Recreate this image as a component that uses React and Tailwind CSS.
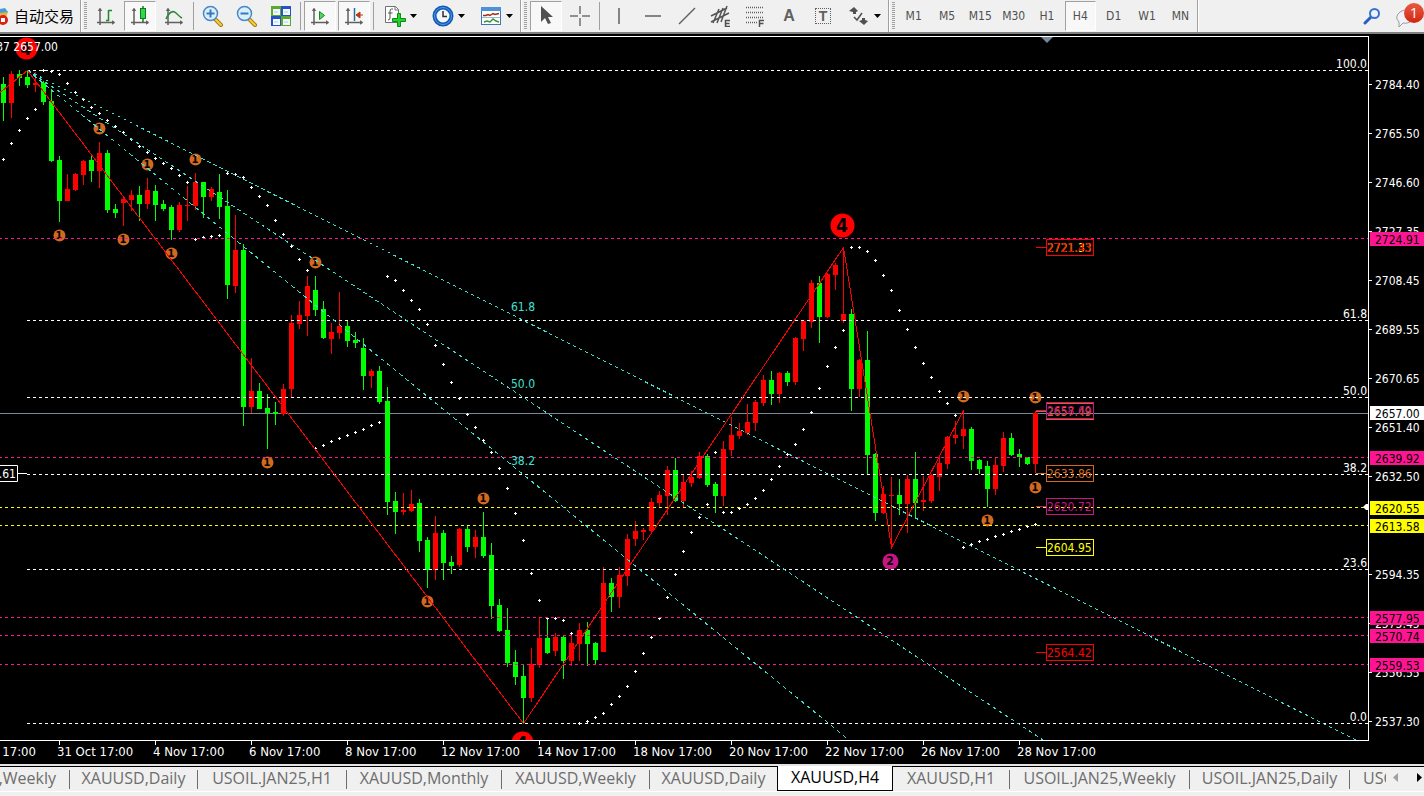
import clsx from 'clsx';

// Every bar is [direction, high, body top, body bottom, low], one bar each 8px
const BARS = [
  ['d', 77, 84, 103, 121], ['u', 71, 74, 103, 118], ['d', 70, 74, 78, 86], ['d', 70, 77, 85, 88],
  ['u', 72, 83, 85, 92], ['d', 81, 83, 102, 105], ['d', 89, 101, 161, 162], ['d', 156, 160, 201, 222],
  ['u', 174, 189, 201, 201], ['u', 173, 174, 190, 191], ['u', 160, 161, 175, 185], ['d', 154, 160, 171, 182],
  ['u', 142, 153, 171, 188], ['d', 150, 153, 210, 213], ['d', 204, 209, 213, 218], ['u', 196, 199, 203, 226],
  ['u', 190, 195, 200, 211], ['d', 186, 195, 204, 221], ['u', 178, 190, 204, 209], ['d', 185, 191, 205, 221],
  ['d', 200, 204, 209, 211], ['d', 205, 207, 230, 240], ['u', 202, 205, 230, 232], ['u', 186, 205, 206, 221],
  ['u', 173, 182, 206, 210], ['d', 182, 182, 197, 218], ['u', 187, 189, 197, 201], ['d', 174, 192, 207, 219],
  ['d', 190, 206, 285, 299], ['u', 215, 250, 286, 293], ['d', 244, 250, 407, 426], ['u', 358, 391, 407, 413],
  ['d', 383, 391, 409, 409], ['d', 394, 408, 413, 449], ['d', 402, 412, 414, 425], ['u', 384, 389, 414, 416],
  ['u', 315, 323, 389, 397], ['u', 301, 315, 324, 329], ['u', 276, 286, 316, 336], ['d', 276, 290, 310, 316],
  ['d', 301, 309, 338, 339], ['u', 323, 332, 339, 354], ['u', 292, 326, 333, 339], ['d', 321, 326, 341, 347],
  ['d', 332, 340, 343, 348], ['d', 338, 348, 376, 390], ['u', 369, 371, 376, 388], ['d', 366, 371, 402, 404],
  ['d', 387, 401, 502, 515], ['d', 492, 501, 512, 534], ['u', 493, 510, 512, 515], ['u', 490, 504, 511, 512],
  ['d', 499, 503, 541, 552], ['d', 537, 540, 570, 588], ['u', 516, 533, 570, 580], ['d', 530, 533, 563, 580],
  ['d', 556, 562, 566, 574], ['u', 528, 529, 565, 567], ['d', 526, 529, 547, 552], ['u', 530, 537, 547, 558],
  ['d', 512, 537, 556, 558], ['d', 543, 555, 606, 619], ['d', 599, 605, 631, 632], ['d', 608, 630, 663, 667],
  ['d', 650, 662, 677, 685], ['d', 665, 676, 698, 723], ['u', 648, 664, 698, 702], ['u', 617, 638, 665, 668],
  ['d', 618, 638, 653, 654], ['u', 633, 637, 651, 656], ['d', 636, 637, 661, 679], ['u', 635, 643, 661, 666],
  ['u', 623, 630, 644, 661], ['d', 622, 630, 644, 666], ['d', 642, 643, 660, 664], ['u', 567, 583, 652, 652],
  ['d', 578, 583, 597, 612], ['u', 567, 575, 597, 608], ['u', 534, 539, 576, 586], ['u', 521, 531, 539, 546],
  ['u', 528, 530, 532, 540], ['u', 498, 502, 531, 533], ['u', 491, 495, 503, 507], ['u', 466, 470, 496, 515],
  ['d', 458, 470, 501, 502], ['u', 475, 482, 501, 507], ['u', 471, 477, 483, 487], ['u', 452, 456, 478, 479],
  ['d', 454, 456, 485, 487], ['d', 482, 484, 496, 513], ['u', 441, 449, 496, 506], ['u', 417, 435, 450, 456],
  ['u', 423, 431, 436, 439], ['u', 404, 422, 433, 435], ['u', 400, 402, 423, 431], ['u', 375, 380, 403, 406],
  ['d', 371, 380, 394, 405], ['u', 372, 373, 394, 403], ['d', 371, 373, 382, 386], ['u', 337, 338, 382, 385],
  ['u', 321, 321, 339, 351], ['u', 280, 283, 322, 328], ['d', 276, 283, 317, 343], ['u', 273, 274, 317, 318],
  ['u', 263, 265, 275, 290], ['u', 247, 314, 321, 323], ['d', 309, 314, 389, 411], ['u', 359, 360, 389, 397],
  ['d', 331, 360, 455, 475], ['d', 453, 454, 513, 521], ['u', 486, 494, 513, 514], ['u', 477, 495, 496, 547],
  ['d', 479, 495, 504, 515], ['u', 475, 479, 504, 533], ['d', 452, 479, 503, 519], ['u', 476, 500, 502, 511],
  ['u', 474, 475, 501, 503], ['u', 456, 463, 477, 491], ['u', 436, 437, 464, 469], ['u', 421, 435, 438, 444],
  ['u', 410, 429, 436, 449], ['d', 427, 429, 461, 470], ['d', 459, 460, 469, 474], ['d', 461, 466, 489, 507],
  ['u', 457, 465, 489, 495], ['u', 432, 438, 466, 472], ['d', 433, 438, 455, 456], ['d', 449, 454, 457, 467],
  ['d', 457, 457, 464, 465], ['u', 411, 413, 464, 473],
];

// Parabolic SAR, one dot per bar
const SAR = [
  159, 143, 130, 118, 109, 70, 71, 74, 83, 92, 99, 107, 113, 120, 126, 132, 139, 146, 152, 158,
  163, 168, 175, 182, 239, 237, 236, 235, 173, 174, 177, 187, 196, 205, 220, 234, 246, 259, 270, 448,
  445, 441, 438, 435, 432, 429, 425, 422, 276, 280, 290, 300, 309, 324, 345, 364, 382, 398, 414, 427,
  440, 452, 468, 488, 513, 540, 573, 600, 618, 618, 620, 633, 723, 721, 717, 713, 704, 696, 686, 671,
  653, 637, 618, 597, 574, 551, 532, 517, 504, 452, 512, 512, 508, 504, 498, 490, 479, 466, 454, 444,
  429, 412, 388, 366, 347, 330, 247, 247, 251, 260, 275, 290, 310, 329, 347, 363, 377, 391, 403, 415,
  547, 544, 541, 539, 536, 534, 531, 529, 526, 524,
];

const FIBS = [
  { y: 70, label: '100.0' },
  { y: 320, label: '61.8' },
  { y: 397, label: '50.0' },
  { y: 474, label: '38.2' },
  { y: 569, label: '23.6' },
  { y: 723, label: '0.0' },
];

const FANS = [
  { x: 1356, y: 740, label: '61.8', labelY: 311 },
  { x: 1043, y: 740, label: '50.0', labelY: 388 },
  { x: 849, y: 740, label: '38.2', labelY: 465 },
];

const LEVELS = [
  { y: 238, price: '2724.91', color: '#ff1493' },
  { y: 457, price: '2639.92', color: '#ff1493' },
  { y: 507, price: '2620.55', color: '#ffff00' },
  { y: 525, price: '2613.58', color: '#ffff00' },
  { y: 617, price: '2577.95', color: '#ff1493' },
  { y: 635, price: '2570.74', color: '#ff1493' },
  { y: 664, price: '2559.53', color: '#ff1493' },
];

const TICKS = [
  [84, '2784.40'], [133, '2765.50'], [182, '2746.60'], [231, '2727.35'], [280, '2708.45'],
  [329, '2689.55'], [378, '2670.65'], [427, '2651.40'], [476, '2632.50'],
  [574, '2594.35'], [623, '2575.45'], [672, '2556.55'], [721, '2537.30'],
];

const SMALL_MARKS = [
  [99, 128], [59, 235], [123, 239], [171, 253], [147, 164], [195, 159], [267, 462],
  [315, 262], [427, 601], [483, 498], [963, 396], [1035, 397], [1035, 487], [987, 520],
];

const TAGS = [
  { y: 247, price: '2721.33', color: '#ffff00' },
  { y: 247, price: '2721.43', color: '#ff0000' },
  { y: 411, price: '2657.49', color: '#d2691e' },
  { y: 410, price: '2658.69', color: '#c71585' },
  { y: 473, price: '2633.86', color: '#d2691e' },
  { y: 506, price: '2620.72', color: '#c71585' },
  { y: 547, price: '2604.95', color: '#ffff00' },
  { y: 652, price: '2564.42', color: '#ff0000' },
];

const DATES = [
  '31 Oct 17:00', '4 Nov 17:00', '6 Nov 17:00', '8 Nov 17:00', '12 Nov 17:00', '14 Nov 17:00',
  '18 Nov 17:00', '20 Nov 17:00', '22 Nov 17:00', '26 Nov 17:00', '28 Nov 17:00',
];

const TABS = [
  { label: 'XAUUSD,Weekly', width: 'w-[70px]', clipped: true },
  { label: 'XAUUSD,Daily', width: 'w-[128px]' },
  { label: 'USOIL.JAN25,H1', width: 'w-[149px]' },
  { label: 'XAUUSD,Monthly', width: 'w-[155px]' },
  { label: 'XAUUSD,Weekly', width: 'w-[148px]' },
  { label: 'XAUUSD,Daily', width: 'w-[127px]', noLine: true },
  { label: 'XAUUSD,H4', width: 'w-[116px]', active: true },
  { label: 'XAUUSD,H1', width: 'w-[117px]' },
  { label: 'USOIL.JAN25,Weekly', width: 'w-[180px]' },
  { label: 'USOIL.JAN25,Daily', width: 'w-[160px]' },
];

const TIMEFRAMES = ['M1', 'M5', 'M15', 'M30', 'H1', 'H4', 'D1', 'W1', 'MN'];

const FONT = 'font-["DejaVu_Sans_Condensed","DejaVu_Sans",sans-serif]';

/* ---------- toolbar ---------- */

function Icon({ size = 22, children }) {
  return (
    <svg width={size} height={size} viewBox={`0 0 ${size} ${size}`} fill="none" className="shrink-0" aria-hidden="true">
      {children}
    </svg>
  );
}

function ToolButton({ label, pressed, menu, children }) {
  return (
    <button
      type="button"
      aria-label={label}
      aria-pressed={pressed}
      className={clsx('h-[31px] flex items-center justify-center shrink-0', menu ? 'w-12 gap-1' : 'w-[34px] px-px')}
    >
      {pressed ? (
        <span className="w-full h-[30px] flex items-center justify-center bg-[#f8f8f8] border border-t-[#a0a0a0] border-l-[#a0a0a0] border-r-white border-b-white">
          {children}
        </span>
      ) : children}
      {menu && (
        <svg width="7" height="4" viewBox="0 0 7 4" className="shrink-0" aria-hidden="true">
          <path d="M0 0h7L3.500 4z" fill="#000" />
        </svg>
      )}
    </button>
  );
}

const Divider = () => <span className="w-px h-7 mx-[2px] bg-[#a0a0a0] shrink-0" />;

function Grip() {
  return (
    <span className="flex items-center h-full shrink-0">
      <span className="w-[2px] h-8 border-l border-l-[#a0a0a0] bg-white" />
      <svg width="7" height="28" className="shrink-0" aria-hidden="true">
        <path d="M3.500 0V28" stroke="#a0a0a0" strokeWidth="3" strokeDasharray="1 1" />
      </svg>
    </span>
  );
}

function Axes() {
  return (
    <g stroke="#606060" strokeWidth="1.500">
      <path d="M5 4v16M2 17.500h17" />
      <path d="M3 6l2-3 2 3M17 15.500l3 2-3 2" fill="#606060" strokeWidth="0.500" />
    </g>
  );
}

function Magnifier({ plus }) {
  return (
    <Icon>
      <path d="M14 15l5 5" stroke="#a87b12" strokeWidth="4" strokeLinecap="round" />
      <path d="M14 15l5 5" stroke="#f6cf3c" strokeWidth="2" strokeLinecap="round" />
      <circle cx="8.500" cy="8.500" r="7" fill="#d8f0fe" stroke="#4a86c8" strokeWidth="1.500" />
      <path d={plus ? 'M4.500 8.500h8M8.500 4.500v8' : 'M4.500 8.500h8'} stroke="#3c78b4" strokeWidth="2" />
    </Icon>
  );
}

function Toolbar() {
  return (
    <header className="flex items-center h-[34px] bg-[#f0f0f0] border-b-2 border-b-[#808080] overflow-hidden shrink-0">
      <button type="button" className="flex items-center w-20 h-8 gap-[5px] shrink-0 text-[15px] text-black font-['Noto_Sans_CJK_SC',sans-serif] whitespace-nowrap">
        <svg width="9" height="22" viewBox="0 0 9 22" className="shrink-0" aria-hidden="true">
          <path d="M0 4l5-1 3 4-3 5H0z" fill="#4b9bd4" />
          <path d="M0 8l8-1-2 5H0z" fill="#e5b04a" />
          <circle cx="3" cy="15" r="5" fill="#d9230f" />
          <rect x="1" y="13" width="4" height="4" fill="#fff" />
        </svg>
        自动交易
      </button>
      <Grip />
      <ToolButton label="Bar chart">
        <Icon>
          <Axes />
          <path d="M11 15.500h3M13.500 16V5M13.500 5.500H17" stroke="#1a8a2a" strokeWidth="1.500" />
        </Icon>
      </ToolButton>
      <ToolButton label="Candlesticks" pressed>
        <Icon>
          <Axes />
          <path d="M14 1v16" stroke="#137a1c" strokeWidth="1.500" />
          <rect x="11.500" y="3.500" width="5" height="10" fill="#2fd84a" stroke="#137a1c" />
        </Icon>
      </ToolButton>
      <ToolButton label="Line chart">
        <Icon>
          <Axes />
          <path d="M3 14C6 7 10 5 13 8s4 4 6 5" stroke="#2c8a3c" strokeWidth="1.500" />
        </Icon>
      </ToolButton>
      <Divider />
      <ToolButton label="Zoom in"><Magnifier plus /></ToolButton>
      <ToolButton label="Zoom out"><Magnifier /></ToolButton>
      <ToolButton label="Tile windows">
        <Icon>
          <rect x="1" y="1" width="10" height="10" fill="#5aaa2c" />
          <rect x="11" y="1" width="10" height="10" fill="#2452c8" />
          <rect x="1" y="11" width="10" height="10" fill="#2452c8" />
          <rect x="11" y="11" width="10" height="10" fill="#5aaa2c" />
          <path d="M3 4h7v6H3zM13 4h7v6h-7zM3 14h7v6H3zM13 14h7v6h-7z" fill="#f4f8ff" />
          <path d="M4 7h4M14 7h4M4 17h4M14 17h4" stroke="#b9c9ee" />
        </Icon>
      </ToolButton>
      <Divider />
      <ToolButton label="Auto scroll" pressed>
        <Icon>
          <Axes />
          <path d="M10.500 6.500v8l5-4z" fill="#4fd860" stroke="#17871f" />
        </Icon>
      </ToolButton>
      <ToolButton label="Chart shift" pressed>
        <Icon>
          <Axes />
          <path d="M11.500 3v13" stroke="#2a6c9c" strokeWidth="1.500" />
          <path d="M13 10h7M13 10l4-3v6z" stroke="#b83a10" fill="#b83a10" />
        </Icon>
      </ToolButton>
      <Divider />
      <ToolButton label="Indicators" menu>
        <Icon>
          <path d="M1.500 1.500h10l3 3v13h-13z" fill="#fff" stroke="#707070" />
          <path d="M11 1.500V5h3.500" stroke="#707070" />
          <path d="M9 4H7.500Q6 4 6 6v7q0 2-2 2M4 8h4.500" stroke="#505050" />
          <path d="M8.500 13.500h5v-5h3v5h5v3h-5v5h-3v-5h-5z" fill="#22d52c" stroke="#0c8c16" />
        </Icon>
      </ToolButton>
      <ToolButton label="Periods" menu>
        <Icon>
          <circle cx="11" cy="11" r="8.500" fill="#f2f6fa" stroke="#1458b4" strokeWidth="4" />
          <circle cx="11" cy="11" r="8.500" stroke="#4b9ff0" />
          <path d="M11 6v5.500h4" stroke="#303030" strokeWidth="1.500" />
        </Icon>
      </ToolButton>
      <ToolButton label="Templates" menu>
        <Icon>
          <rect x="1.500" y="2.500" width="19" height="17" fill="#fff" stroke="#3a78b8" />
          <path d="M1 2h20v4H1z" fill="#4c92d8" />
          <path d="M3 10.500h3l2-1 2 1 3-2 2 1 4-1" stroke="#a02c10" strokeWidth="1.500" />
          <path d="M2 12.500h18" stroke="#9fb8d4" />
          <path d="M4 17l3-1 3 1 3-3 3 2 3 1" stroke="#2a9a34" strokeWidth="1.500" />
        </Icon>
      </ToolButton>
      <Grip />
      <ToolButton label="Cursor" pressed>
        <Icon><path d="M6 1v16l4-4 3 6 3-1-3-6h5z" fill="#505050" /></Icon>
      </ToolButton>
      <ToolButton label="Crosshair">
        <Icon><path d="M11 1v8M11 13v8M1 11h8M13 11h8" stroke="#707070" strokeWidth="1.500" /></Icon>
      </ToolButton>
      <Divider />
      <ToolButton label="Vertical line">
        <Icon><path d="M11 3v16" stroke="#606060" strokeWidth="1.500" /></Icon>
      </ToolButton>
      <ToolButton label="Horizontal line">
        <Icon><path d="M3 11h16" stroke="#606060" strokeWidth="1.500" /></Icon>
      </ToolButton>
      <ToolButton label="Trendline">
        <Icon><path d="M3 19L19 3" stroke="#606060" strokeWidth="1.500" /></Icon>
      </ToolButton>
      <ToolButton label="Equidistant channel">
        <Icon>
          <path d="M1 11L17 3M1 17L19 8M3 18L9 4M7 18L13 3M11 17L17 1" stroke="#555" strokeWidth="1.500" />
          <path d="M20 15.500h-4.500v6H20M16 18.500h3.500" stroke="#505050" strokeWidth="1.500" />
        </Icon>
      </ToolButton>
      <ToolButton label="Fibonacci retracement">
        <Icon>
          <path d="M2 2.500h18M2 7.500h18M2 12.500h18M2 17.500h11" stroke="#606060" strokeDasharray="1 1" strokeWidth="1.500" />
          <path d="M20 15.500h-4.500V22M16 18.500h3.500" stroke="#505050" strokeWidth="1.500" />
        </Icon>
      </ToolButton>
      <ToolButton label="Text">
        <span className="font-['Liberation_Sans',sans-serif] font-bold text-[16px] text-[#606060]">A</span>
      </ToolButton>
      <ToolButton label="Text label">
        <span className="w-4 h-4 flex items-center justify-center border border-dotted border-[#606060] font-['Liberation_Sans',sans-serif] font-bold text-[14px] leading-4 text-[#606060]">T</span>
      </ToolButton>
      <ToolButton label="Arrows" menu>
        <Icon>
          <path d="M6 2l4 4-2 1v2H5V7L1 6z" fill="#505050" />
          <path d="M16 20l-5-4 3-1v-2h3v2l3 1z" fill="#505050" />
          <path d="M6 12l3 3 5-7" stroke="#505050" strokeWidth="1.500" />
        </Icon>
      </ToolButton>
      <Grip />
      <div className={clsx('grid grid-cols-9 w-[300px] h-[31px] shrink-0 text-[12px] text-[#505050]', FONT)}>
        {TIMEFRAMES.map(tf => (
          <button
            key={tf}
            type="button"
            aria-pressed={tf === 'H4'}
            className={clsx(
              'h-[30px] mx-px border text-center',
              tf === 'H4'
                ? 'bg-[#f8f8f8] border-t-[#a0a0a0] border-l-[#a0a0a0] border-r-white border-b-white'
                : 'border-transparent',
            )}
          >
            {tf}
          </button>
        ))}
      </div>
      <span className="w-[2px] h-8 border-l border-l-[#a0a0a0] bg-white shrink-0" />
      <div className="flex items-center ml-auto shrink-0">
        <button type="button" aria-label="Search" className="w-8 h-8 flex items-center justify-center">
          <Icon size={18}>
            <path d="M8 10l-6 6" stroke="#2a5cc4" strokeWidth="3" strokeLinecap="round" />
            <circle cx="11.500" cy="6.500" r="4.500" fill="#eef4ff" stroke="#3a70d0" strokeWidth="2" />
          </Icon>
        </button>
        <button type="button" aria-label="Messages" className="relative w-9 h-8">
          <svg width="36" height="32" viewBox="0 0 36 32" fill="none" aria-hidden="true">
            <path d="M12 12q6-4 13 0 4 6-3 10-4 2-7 1l-4 4v-5q-5-5 1-10z" fill="#f2f2f6" stroke="#9a9aa4" />
          </svg>
          <span className="absolute top-[3px] right-0 w-5 h-5 rounded-full bg-gradient-to-b from-[#ea5a40] to-[#d22010] text-white text-[14px] leading-5 text-center font-['Open_Sans',sans-serif]">
            1
          </span>
        </button>
      </div>
    </header>
  );
}

/* ---------- chart ---------- */

function Mark({ x, y, r, fill, digit, size }) {
  return (
    <g>
      <circle cx={x + 0.5} cy={y + 0.5} r={r} fill={fill} />
      <text x={x} y={y + Math.round(size * 0.37)} textAnchor="middle" fontSize={size} fontWeight="bold" fill="#000">
        {digit}
      </text>
    </g>
  );
}

function PriceTag({ y, price, color }) {
  return (
    <g>
      <path d={`M1036 ${y + 0.5}H1046`} stroke={color} />
      <rect x="1046.500" y={y - 7.5} width="47" height="16" stroke={color} fill="none" />
      <text x="1047" y={y + 5} fill={color}>{price}</text>
    </g>
  );
}

function Plot() {
  return (
    <svg width="100%" height="100%" className={clsx('block text-[12px]', FONT)} role="img" aria-label="XAUUSD,H4">
      <g transform="translate(0 -37)">
        <path d="M1041 37h12l-6 6z" fill="#778899" />

        <g shapeRendering="crispEdges">
          <rect x="0" y="413" width="100%" height="1" fill="#778899" />
          {BARS.map(([dir, high, top, bottom, low], i) => (
            <g key={i} fill={dir === 'u' ? '#ff0000' : '#00ff00'}>
              <rect x={3 + i * 8} y={high} width="1" height={low - high} />
              <rect x={1 + i * 8} y={top} width="5" height={bottom - top} />
            </g>
          ))}
          {SAR.map((y, i) => (
            <path key={i} d={`M${2 + i * 8} ${y + 0.5}h3M${3.5 + i * 8} ${y - 1}v3`} stroke="#fff" />
          ))}
        </g>

        {SMALL_MARKS.map(([x, y]) => (
          <Mark key={`${x}-${y}`} x={x} y={y} r={6} fill="#d2691e" digit="1" size={11} />
        ))}
        <Mark x={890} y={561} r={8} fill="#c71585" digit="2" size={12} />
        <Mark x={26} y={48} r={11} fill="#ff0000" digit="4" size={18} />
        <Mark x={842} y={225} r={12} fill="#ff0000" digit="4" size={19} />
        <Mark x={522} y={742} r={11} fill="#ff0000" digit="4" size={18} />
        <text x="58" y="51" textAnchor="end" fill="#fff">2656.37 2657.00</text>

        <g shapeRendering="crispEdges" fill="none">
          {LEVELS.map(l => (
            <line key={l.y} x1="-1" x2="100%" y1={l.y + 0.5} y2={l.y + 0.5} stroke={l.color} strokeDasharray="3 3" />
          ))}
          {FIBS.map(f => (
            <line key={f.y} x1="27" x2="100%" y1={f.y + 0.5} y2={f.y + 0.5} stroke="#fff" strokeDasharray="3 3" />
          ))}
          {FANS.map(f => (
            <path
              key={f.label}
              d={`M27.500 70.500L${f.x} ${f.y}`}
              pathLength={f.x - 27}
              stroke="#40e0d0"
              strokeDasharray="3 3"
            />
          ))}
          <path d="M0 92.500L27.500 70.500L523.500 723.500L843.500 247.500L891.500 547.500L963.500 410.500" stroke="#ff0000" />
        </g>

        {FANS.map(f => (
          <text key={f.label} x="511" y={f.labelY} fill="#40e0d0">{f.label}</text>
        ))}
        {/* the nested svg keeps the labels on the right edge at any width */}
        <svg x="100%" overflow="visible">
          {FIBS.map(f => (
            <text key={f.label} x="-1" y={f.y - 2} textAnchor="end" fill="#fff">{f.label}</text>
          ))}
          <path d="M-5 507l3-3h2v6h-2z" fill="#fff" />
        </svg>

        {TAGS.map(t => <PriceTag key={t.price} {...t} />)}
        <path d="M0 465.500H17.500V481.500H0M17 473.500H27" stroke="#fff" fill="none" />
        <text x="16" y="478" textAnchor="end" fill="#fff">2633.61</text>
      </g>
    </svg>
  );
}

function PriceLabel({ y, price, color }) {
  return (
    <g>
      <rect x="1" y={y - 6} width="100%" height="14" fill={color} />
      <text x="6" y={y + 6} fill="#000">{price}</text>
    </g>
  );
}

function PriceAxis() {
  return (
    <svg width="100%" height="100%" className={clsx('block text-[12px]', FONT)}>
      <g transform="translate(0 -36)">
        {TICKS.map(([y, price]) => (
          <g key={y} fill="#fff">
            <rect x="0" y={y} width="3" height="1" />
            <text x="6" y={y + 5}>{price}</text>
          </g>
        ))}
        {LEVELS.map(l => <PriceLabel key={l.y} {...l} />)}
        <PriceLabel y={412} price="2657.00" color="#fff" />
      </g>
    </svg>
  );
}

function TimeAxis() {
  return (
    <svg width="100%" height="100%" className={clsx('block text-[13px]', FONT)}>
      <text x="36" y="15" textAnchor="end" fill="#fff">29 Oct 17:00</text>
      {DATES.map((date, i) => (
        <g key={date} fill="#fff">
          <rect x={59 + i * 96} y="0" width="1" height="4" />
          <text x={57 + i * 96} y="15">{date}</text>
        </g>
      ))}
    </svg>
  );
}

/* ---------- chart tabs ---------- */

function ChartTabs() {
  return (
    <nav className="flex h-[30px] bg-[#f0f0f0] shrink-0 font-['Open_Sans',sans-serif] text-[16px] text-[#6d6d6d] leading-5">
      <div className="flex flex-1 min-w-0 h-[26px] border-b border-b-white overflow-hidden">
        {TABS.map((tab, i) => (
          <div
            key={i}
            className={clsx(
              'flex items-center shrink-0 h-[25px]',
              tab.width,
              tab.active ? 'bg-white text-black border border-black border-t-0' : 'border-t border-t-black',
            )}
          >
            <button
              type="button"
              className={clsx(
                'flex flex-1 min-w-0 h-full pt-px whitespace-nowrap',
                tab.clipped ? 'justify-end pr-[13px]' : 'justify-center',
              )}
            >
              {tab.label}
            </button>
            {!tab.active && !tab.noLine && <span className="w-px h-[19px] bg-[#6d6d6d] shrink-0" />}
          </div>
        ))}
        <button type="button" className="flex flex-1 min-w-0 h-[25px] pl-[13px] pt-px border-t border-t-black whitespace-nowrap overflow-hidden">
          USOIL.JAN25,H4
        </button>
      </div>
      <div className="flex items-center justify-between w-[38px] h-[26px] pl-[7px] pb-1 border-t border-t-black border-b border-b-white shrink-0">
        <button type="button" aria-label="Scroll left">
          <svg width="5" height="9" className="block"><path d="M5 0v9L0 4.500z" fill="#a0a0a0" /></svg>
        </button>
        <button type="button" aria-label="Scroll right">
          <svg width="7" height="9" className="block"><path d="M0 0v9l5-4.500z" fill="#000" /></svg>
        </button>
      </div>
    </nav>
  );
}

export default function App() {
  return (
    <div className="flex flex-col h-screen bg-black overflow-hidden">
      <Toolbar />
      <main className="flex-1 min-h-0 grid grid-cols-[minmax(0,1fr)_55px] grid-rows-[minmax(0,1fr)_23px] pt-[2px] bg-black">
        <div className="border-t border-r border-b border-white overflow-hidden">
          <Plot />
        </div>
        <PriceAxis />
        <div className="col-span-2">
          <TimeAxis />
        </div>
      </main>
      <div className="h-[2px] bg-[#e3e3e3] shrink-0" />
      <ChartTabs />
    </div>
  );
}
